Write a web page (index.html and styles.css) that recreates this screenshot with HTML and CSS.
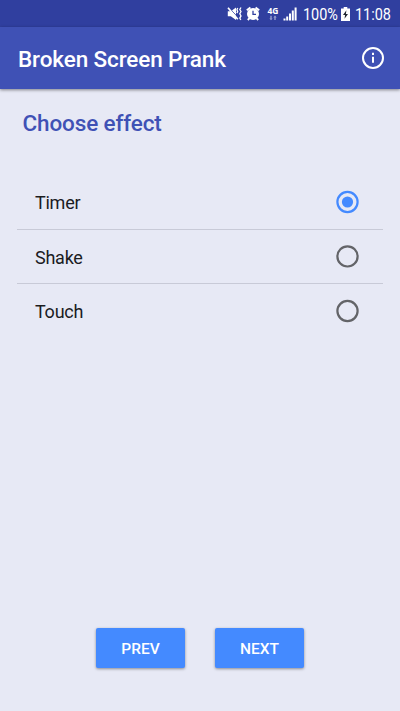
FILE: index.html
```html
<!DOCTYPE html>
<html lang="en">
<head>
<meta charset="utf-8">
<title>Broken Screen Prank</title>
<link rel="stylesheet" href="styles.css">
</head>
<body>
<div class="screen">
  <div class="status">
    <svg class="status-icons" width="78" height="27" viewBox="0 0 78 27" fill="#fff">
      <path d="M7.800 11.200h3L16 7.500v12.500l-5.200-3.700h-3z"/>
      <path d="M9.400 8L18 17.600" stroke="#303f9f" stroke-width="1"/>
      <path d="M8 7.800L17.800 19.300" stroke="#fff" stroke-width="1.700"/>
      <path d="M17.700 8l-.8 1.700.8 1.700-.8 1.700M21 7.500l-1.200 2 1.200 2-1.200 2.200 1.200 2.200-1.200 2.200 1 1.700" fill="none" stroke="#fff" stroke-width="1.300"/>
      <circle cx="33" cy="14" r="6"/>
      <path d="M26.800 10.200l3.600-2.700M39.200 10.200l-3.600-2.700M29.300 18.300l-1.500 1.700M36.700 18.300l1.500 1.700" stroke="#fff" stroke-width="1.900"/>
      <path d="M33 10.700V14.300H36" fill="none" stroke="#303f9f" stroke-width="1.300"/>
      <text class="network" x="47.400" y="14" textLength="11" lengthAdjust="spacingAndGlyphs">4G</text>
      <path d="M51 20.200l-1.700-1.800h1v-2.600h1.400v2.600h1zM55 15.600l1.700 1.800h-1V20h-1.400v-2.600h-1z" opacity=".5"/>
      <path d="M63.500 18.500h2V20.500h-2zM66.200 16.500h2v4h-2zM69 13.500h2v7h-2zM71.800 10.500h2v10h-2zM74.600 7.500h2v13h-2z"/>
    </svg>
    <span class="level"><span class="narrow">100%</span></span>
    <svg class="battery" width="9" height="14" viewBox="0 0 9 14">
      <path d="M0 1.600h2.700V0h3.600v1.600H9V14H0z" fill="#fff"/>
      <path d="M5.400 3.200L2 8h2.100l-.6 3.700L7 6.900H4.900z" fill="#20262f"/>
    </svg>
    <span class="clock"><span class="narrow">11:08</span></span>
  </div>
  <header class="bar">
    <h1>Broken Screen Prank</h1>
    <svg width="24" height="24" viewBox="0 0 24 24">
      <circle cx="12" cy="12" r="10" fill="none" stroke="#fff" stroke-width="2"/>
      <path d="M11 6.800h2V9h-2zM11 10.800h2v6h-2z" fill="#fff"/>
    </svg>
  </header>
  <main>
    <h2>Choose effect</h2>
    <ul class="options">
      <li><span class="label">Timer</span><svg class="radio checked" viewBox="0 0 24 24"><circle cx="11.500" cy="12" r="10.100"/><circle class="dot" cx="11.500" cy="12" r="5.600"/></svg></li>
      <li><span class="label">Shake</span><svg class="radio" viewBox="0 0 24 24"><circle cx="11.500" cy="12.400" r="10.100"/></svg></li>
      <li><span class="label">Touch</span><svg class="radio" viewBox="0 0 24 24"><circle cx="11.500" cy="12" r="10.100"/></svg></li>
    </ul>
  </main>
  <footer>
    <button>PREV</button>
    <button>NEXT</button>
  </footer>
</div>
</body>
</html>
```
FILE: styles.css
```css
* { box-sizing: border-box; }
body {
  margin: 0;
  font-family: Roboto, sans-serif;
  background: #e7e9f5;
}
.screen {
  width: 400px;
  height: 711px;
  display: flex;
  flex-direction: column;
  overflow: hidden;
}
.status {
  height: 27px;
  flex: none;
  display: flex;
  align-items: center;
  padding-left: 220px;
  background: #303f9f;
  color: #fff;
  font-size: 17px;
  line-height: 27px;
}
.network { font: 700 8px "Open Sans", sans-serif; }
.level { width: 35px; margin-left: 4.500px; }
.battery { margin-left: 3.500px; }
.clock { margin-left: 4.500px; width: 38px; }
.narrow {
  display: block;
  white-space: nowrap;
  transform: translateY(1px) scaleX(.85);
  transform-origin: left;
}
.bar {
  height: 62px;
  flex: none;
  display: flex;
  align-items: center;
  justify-content: space-between;
  padding: 0 15px 0 18px;
  background: #3f51b5;
  color: #fff;
  box-shadow: 0 1px 3px rgba(0, 0, 0, .45);
}
h1, h2 { margin: 0; font-weight: 500; font-size: 22.500px; line-height: 28px; }
h1 { padding-top: 1px; letter-spacing: -.110px; }
main { flex: 1; padding: 20px 17px 0; }
h2 { padding-left: 5.500px; color: #3f51b5; letter-spacing: -.130px; }
.options { list-style: none; margin: 39px 0 0; padding: 0; }
.options li {
  height: 54.200px;
  display: flex;
  align-items: center;
  justify-content: space-between;
  padding: 0 23.500px 0 18px;
  border-bottom: 1px solid #c8cad7;
  font-size: 18px;
  letter-spacing: -.250px;
  color: #1b1c1f;
}
.options li:last-child { border-bottom: 0; }
.label { padding-top: 1px; }
.options li:first-child .label { padding-top: 0; }
.radio {
  width: 24px;
  height: 24px;
  margin-bottom: 1px;
  fill: none;
  stroke: #636468;
  stroke-width: 2.200px;
}
.checked { stroke: #448aff; }
.dot { fill: #448aff; stroke: none; }
footer {
  display: flex;
  justify-content: center;
  gap: 30px;
  padding-bottom: 43px;
}
button {
  width: 89px;
  height: 40px;
  border: 0;
  border-radius: 2px;
  padding: 2px 0 0;
  background: #448aff;
  color: #fff;
  font: 500 15.500px Roboto, sans-serif;
  box-shadow: 0 1px 3px rgba(0, 0, 0, .4);
}
```
